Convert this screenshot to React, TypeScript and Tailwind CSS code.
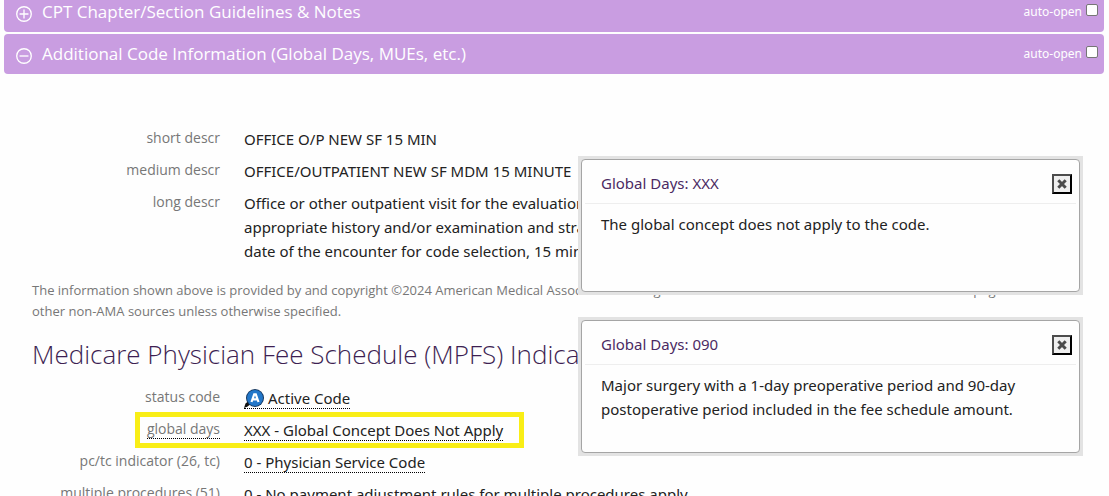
import { useState } from "react";
import type { ReactNode } from "react";

type Row = {
  label: string;
  value: ReactNode;
  link?: boolean;
  labelLink?: boolean;
  highlight?: boolean;
};

const ActiveIcon = () => (
  <svg
    viewBox="0 0 20 20"
    className="inline-block w-5 h-5 mr-1 align-text-bottom"
    aria-hidden="true"
  >
    <path d="M0 20 L1.5 15.5 L4.5 13 L7 16 L3.5 18.5 Z" fill="#111" />
    <circle cx="11" cy="10" r="9" fill="#14365f" />
    <circle cx="11" cy="10" r="8" fill="#2377c9" />
    <path
      d="M7.5 14 L10.2 6.4 H11.8 L14.5 14 M9 11.4 H13"
      fill="none"
      stroke="#fff"
      strokeWidth="2.2"
    />
  </svg>
);

const descriptions: Row[] = [
  { label: "short descr", value: "OFFICE O/P NEW SF 15 MIN" },
  { label: "medium descr", value: "OFFICE/OUTPATIENT NEW SF MDM 15 MINUTE" },
  {
    label: "long descr",
    value: (
      <>
        Office or other outpatient visit for the evaluation and management
        <br />
        appropriate history and/or examination and straightforward
        <br />
        date of the encounter for code selection, 15 minutes must be met
      </>
    ),
  },
];

const indicators: Row[] = [
  {
    label: "status code",
    value: (
      <>
        <ActiveIcon />
        Active Code
      </>
    ),
    link: true,
  },
  {
    label: "global days",
    value: "XXX - Global Concept Does Not Apply",
    link: true,
    labelLink: true,
    highlight: true,
  },
  {
    label: "pc/tc indicator (26, tc)",
    value: "0 - Physician Service Code",
    link: true,
  },
  {
    label: "multiple procedures (51)",
    value: "0 - No payment adjustment rules for multiple procedures apply",
    link: true,
  },
];

const dialogs = [
  {
    title: "Global Days: XXX",
    body: "The global concept does not apply to the code.",
  },
  {
    title: "Global Days: 090",
    body: "Major surgery with a 1-day preoperative period and 90-day postoperative period included in the fee schedule amount.",
  },
];

const SectionBar = ({
  title,
  id,
  open,
}: {
  title: string;
  id: string;
  open?: boolean;
}) => (
  <div className="flex items-center h-10 pl-3 pr-1 text-white bg-[#c99de1] rounded">
    <button
      type="button"
      className="flex items-center gap-[10px] text-[17px] font-['Open_Sans','Noto_Sans',sans-serif]"
    >
      <svg
        viewBox="0 0 18 18"
        className="w-4 h-4 mt-1 overflow-visible"
        fill="none"
        stroke="currentColor"
        strokeWidth="1.5"
        aria-hidden="true"
      >
        <circle cx="9" cy="9" r="8.2" />
        <path d={open ? "M4 9h10" : "M4 9h10M9 4v10"} />
      </svg>
      {title}
    </button>
    <label htmlFor={id} className="ml-auto mr-1 text-xs">
      auto-open
    </label>
    <input
      id={id}
      type="checkbox"
      className="w-3 h-3 mb-1 mr-[2px] bg-white border border-[#767676] rounded-xs appearance-none"
    />
  </div>
);

const DataRow = ({ row }: { row: Row }) => (
  <div className="relative flex gap-6">
    {row.highlight && (
      <span className="absolute -inset-y-[6px] left-[103px] w-[389px] border-5 border-[#f9ee16]" />
    )}
    <dt className="w-[188px] shrink-0 text-right text-sm leading-[22px] text-[#777] font-['Open_Sans','Noto_Sans',sans-serif]">
      {row.labelLink ? (
        <a href="#global" className="border-b border-dotted border-black">
          {row.label}
        </a>
      ) : (
        row.label
      )}
    </dt>
    <dd className="text-[15px] leading-6 whitespace-nowrap text-[#222]">
      {row.link ? (
        <a href="#code" className="border-b border-dotted border-black">
          {row.value}
        </a>
      ) : (
        row.value
      )}
    </dd>
  </div>
);

const InfoDialog = ({
  title,
  body,
  onClose,
}: {
  title: string;
  body: string;
  onClose: () => void;
}) => (
  <section className="bg-[#e3e3e3] p-[3px]">
    <div className="h-[133px] px-[3px] bg-[#fefefe] border border-[#a5a5a5] rounded-sm">
      <header className="flex items-center justify-between h-11 pl-4 pr-1 pt-1 border-b border-[#eee]">
        <h3 className="text-[15px] text-[#4b2a63]">{title}</h3>
        <button
          type="button"
          aria-label="Close"
          onClick={onClose}
          className="flex items-center justify-center w-5 h-5 bg-[#efefef] border-2 border-t-[#4c4c4c] border-l-[#4c4c4c] border-black"
        >
          <svg
            viewBox="0 0 10 10"
            className="w-[10px] h-[10px]"
            stroke="#4a4a4a"
            strokeWidth="3"
            aria-hidden="true"
          >
            <path d="M1.3 1.3l7.4 7.4M8.7 1.3L1.3 8.7" />
          </svg>
        </button>
      </header>
      <p className="px-4 pt-2 text-[15px] leading-6 text-[#222]">{body}</p>
    </div>
  </section>
);

const App = () => {
  const [closed, setClosed] = useState<string[]>([]);

  return (
    <main className="relative h-screen overflow-hidden bg-[#fefefe] font-['Noto_Sans','Open_Sans',sans-serif]">
      {/* page is scrolled a little, the first bar is cut at the top */}
      <div className="flex flex-col gap-[2px] -mt-2 ml-1 mr-[5px]">
        <SectionBar id="open-notes" title="CPT Chapter/Section Guidelines & Notes" />
        <SectionBar
          id="open-info"
          title="Additional Code Information (Global Days, MUEs, etc.)"
          open
        />
      </div>

      <div className="px-8 pt-[53px]">
        <dl className="flex flex-col gap-2">
          {descriptions.map((row) => (
            <DataRow key={row.label} row={row} />
          ))}
        </dl>

        <p className="mt-[17px] text-[13px] leading-[21px] text-[#777] font-['Open_Sans','Noto_Sans',sans-serif]">
          The information shown above is provided by and copyright ©2024
          American Medical Association. Changes to some of the data that was shown here on this page are from
          <br />
          other non-AMA sources unless otherwise specified.
        </p>

        <h2 className="mt-3 mb-3 text-[26px] leading-10 font-light whitespace-nowrap text-[#3d1f52] font-['Open_Sans','Noto_Sans',sans-serif]">
          Medicare Physician Fee Schedule (MPFS) Indicators
        </h2>

        <dl className="flex flex-col gap-2">
          {indicators.map((row) => (
            <DataRow key={row.label} row={row} />
          ))}
        </dl>
      </div>

      <div className="absolute top-[156px] right-[26px] w-[505px] flex flex-col gap-[22px]">
        {dialogs
          .filter((d) => !closed.includes(d.title))
          .map((d) => (
            <InfoDialog
              key={d.title}
              title={d.title}
              body={d.body}
              onClose={() => setClosed((prev) => [...prev, d.title])}
            />
          ))}
      </div>
    </main>
  );
};

export default App;
